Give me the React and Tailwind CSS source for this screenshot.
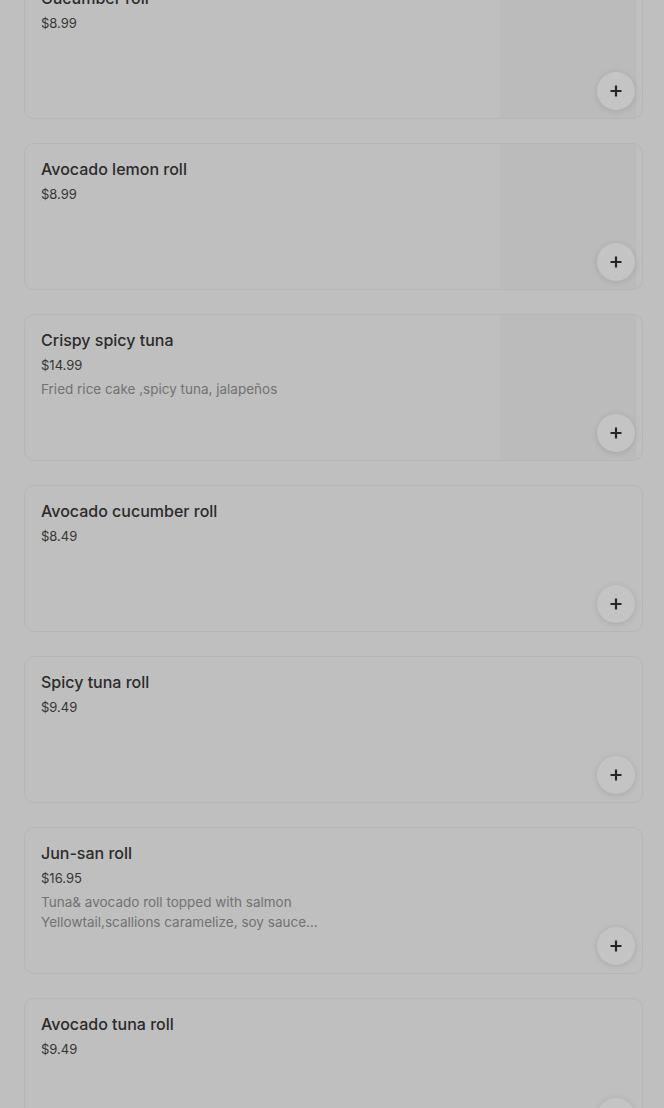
const items = [
  { name: "Cucumber roll", price: "$8.99", image: true },
  { name: "Avocado lemon roll", price: "$8.99", image: true },
  { name: "Crispy spicy tuna", price: "$14.99", desc: ["Fried rice cake ,spicy tuna, jalapeños"], image: true },
  { name: "Avocado cucumber roll", price: "$8.49" },
  { name: "Spicy tuna roll", price: "$9.49" },
  {
    name: "Jun-san roll",
    price: "$16.95",
    desc: ["Tuna& avocado roll topped with salmon", "Yellowtail,scallions caramelize, soy sauce…"],
  },
  { name: "Avocado tuna roll", price: "$9.49" },
];

function PlusIcon() {
  return (
    <svg width="14" height="14" viewBox="0 0 14 14" fill="none">
      <path d="M7 1.5v11M1.5 7h11" stroke="#262626" strokeWidth="2.2" />
    </svg>
  );
}

function MenuCard({ item }) {
  return (
    <div className="relative flex h-[147px] shrink-0 overflow-hidden rounded-[10px] border border-[#b6b6b6] bg-[#bfbfbf]">
      <div className="flex-1 px-4 pt-[16px]">
        <div className="text-[16px] leading-[18px] font-medium text-[#2b2b2b]">{item.name}</div>
        <div className="mt-[6px] text-[13px] leading-[20px] text-[#363636]">{item.price}</div>
        {item.desc && (
          <div className="mt-1 text-[13.5px] leading-[20px] text-[#727272]">
            {item.desc.map((line) => (
              <div key={line}>{line}</div>
            ))}
          </div>
        )}
      </div>
      {item.image && <div className="mr-[6px] w-[136px] border-r border-[#b9b9b9] bg-[#bbbbbb]" />}
      <button className="absolute right-[7px] bottom-[8px] flex h-[38px] w-[38px] items-center justify-center rounded-full bg-[#c4c4c4] shadow-[0_1px_6px_rgba(0,0,0,0.12)]">
        <PlusIcon />
      </button>
    </div>
  );
}

export default function App() {
  return (
    <div className="h-[1108px] overflow-hidden bg-[#bfbfbf]" style={{ fontFamily: "Inter, 'Noto Sans', sans-serif" }}>
      <div className="mt-[-28px] flex flex-col gap-[24px] pr-[21px] pl-[24px]">
        {items.map((item) => (
          <MenuCard key={item.name} item={item} />
        ))}
      </div>
    </div>
  );
}
